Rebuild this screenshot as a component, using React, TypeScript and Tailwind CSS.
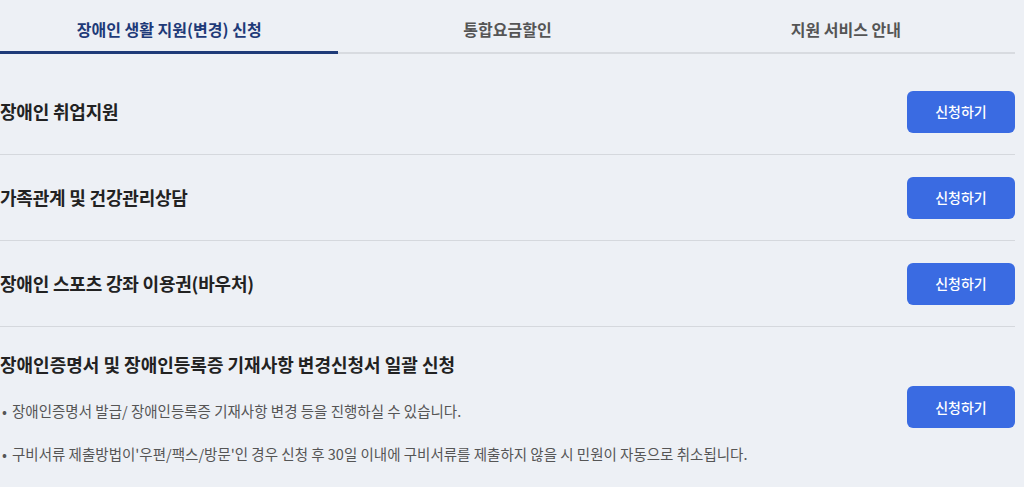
const tabs = ["장애인 생활 지원(변경) 신청", "통합요금할인", "지원 서비스 안내"];

const simpleRows = [
  "장애인 취업지원",
  "가족관계 및 건강관리상담",
  "장애인 스포츠 강좌 이용권(바우처)",
];

const notes = [
  "장애인증명서 발급/ 장애인등록증 기재사항 변경 등을 진행하실 수 있습니다.",
  "구비서류 제출방법이'우편/팩스/방문'인 경우 신청 후 30일 이내에 구비서류를 제출하지 않을 시 민원이 자동으로 취소됩니다.",
];

const ApplyButton = () => (
  <button
    type="button"
    className="w-[108px] h-[42px] shrink-0 rounded-[6px] bg-[#3a6be2] text-white text-[14px] font-medium"
  >
    신청하기
  </button>
);

export default function App() {
  return (
    <div
      className="w-[1024px] h-[487px] overflow-hidden bg-[#edf0f5] pr-[9px]"
      style={{ fontFamily: '"Noto Sans CJK KR", "Noto Sans", sans-serif' }}
    >
      {/* tab section */}
      <div className="flex items-start border-b-2 border-[#d8dbe0]">
        {tabs.map((tab, index) => (
          <div
            key={`tab${index}`}
            className={`flex-1 flex justify-center pt-[17px] text-[16px] font-bold ${
              index === 0
                ? "h-[54px] -mb-[2px] border-b-[3px] border-[#1e3a78] text-[#1e3a78]"
                : "h-[52px] text-[#555]"
            }`}
          >
            {tab}
          </div>
        ))}
      </div>

      {/* list section */}
      <div className="mt-[15px]">
        {simpleRows.map((row, index) => (
          <div
            key={`row${index}`}
            className="h-[86px] flex items-center justify-between border-b border-[#d5d8dd]"
          >
            <h2 className="text-[18px] font-bold text-[#222] tracking-[-0.2px]">
              {row}
            </h2>
            <ApplyButton />
          </div>
        ))}

        <div className="h-[161px] flex items-center justify-between border-b border-[#d5d8dd]">
          <div className="flex flex-col">
            <h2 className="text-[18px] leading-[26px] font-bold text-[#222]">
              장애인증명서 및 장애인등록증 기재사항 변경신청서 일괄 신청
            </h2>
            <ul className="mt-[24px] flex flex-col gap-[23px]">
              {notes.map((note, index) => (
                <li
                  key={`note${index}`}
                  className="flex text-[14.5px] leading-[20px] text-[#555]"
                >
                  <span className="w-[12px] shrink-0 pl-[2px]">•</span>
                  {note}
                </li>
              ))}
            </ul>
          </div>
          <ApplyButton />
        </div>
      </div>
    </div>
  );
}
